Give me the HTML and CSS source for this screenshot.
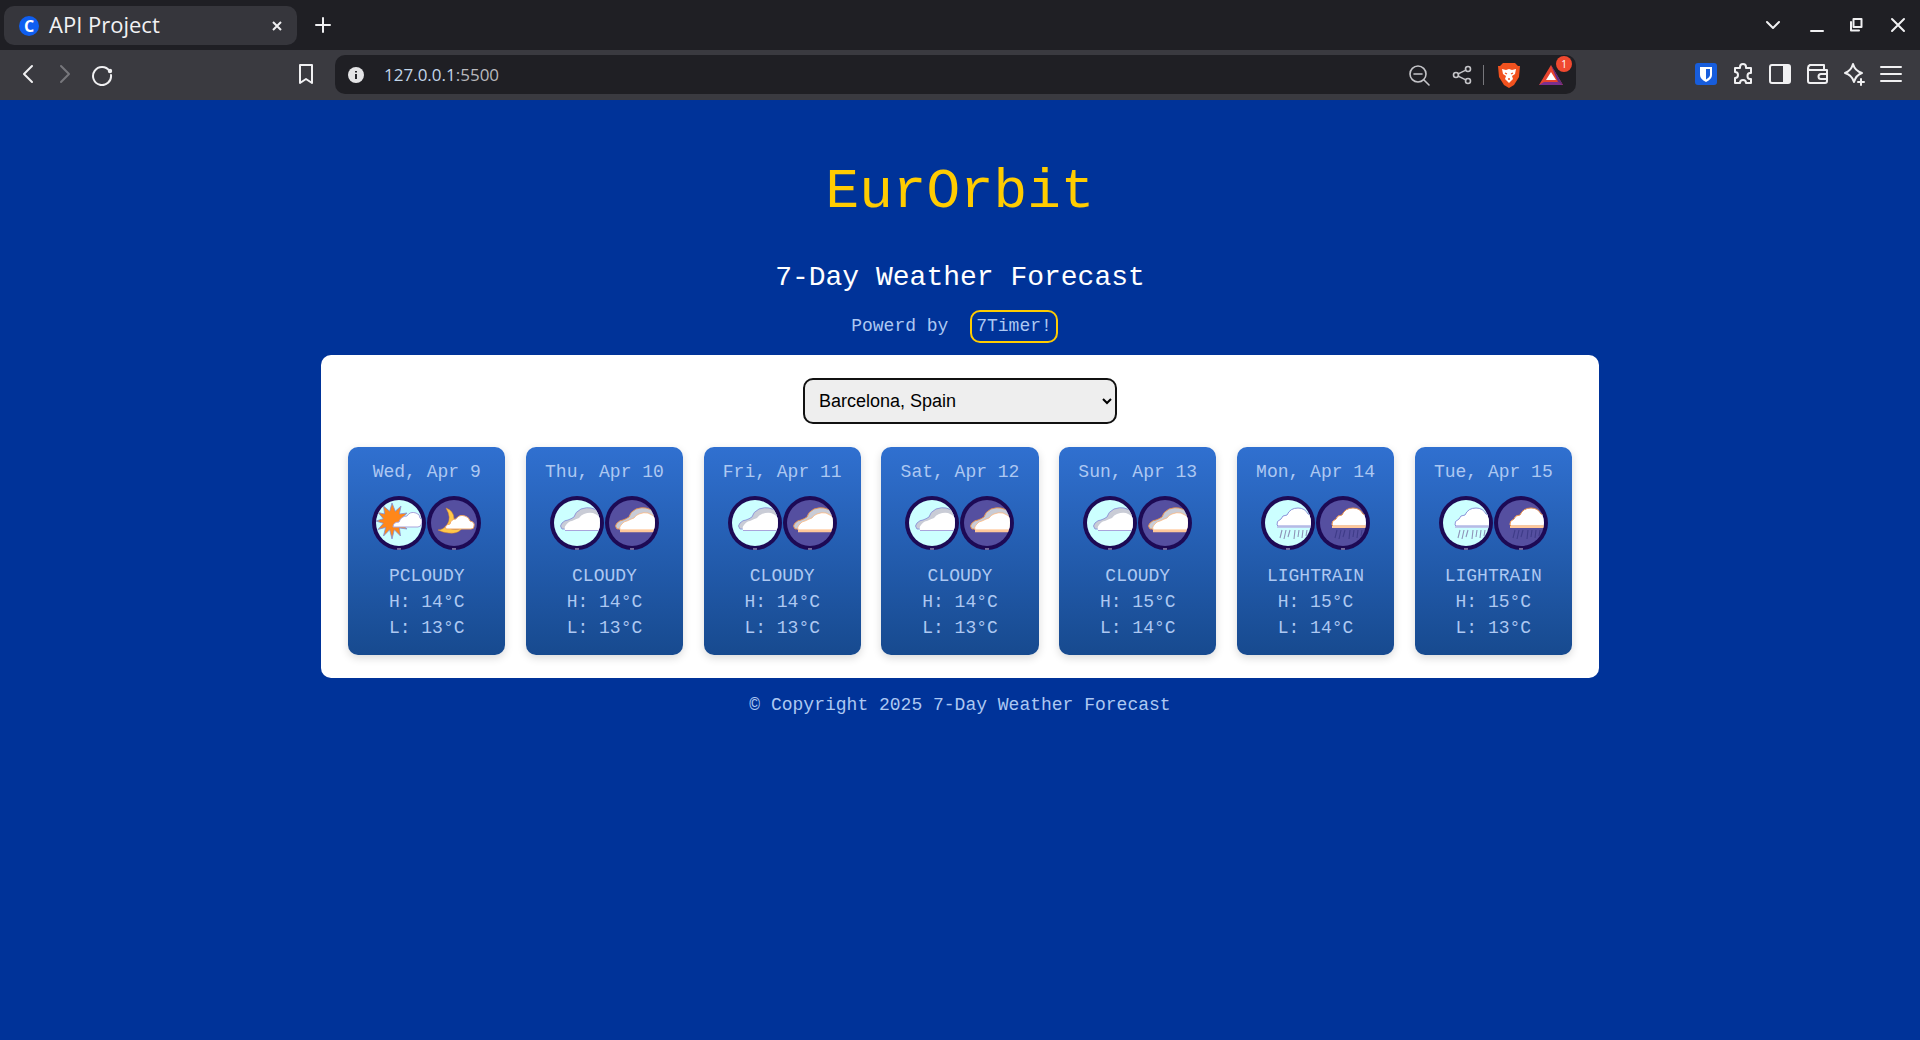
FILE: index.html
```html
<!DOCTYPE html>
<html>
<head>
    <title>API Project</title>
    <link rel="stylesheet" href="styles.css">
</head>
<body>

    <!-- Weather symbols, one per condition and day part -->
    <svg class="symbol-defs" width="0" height="0">
        <defs>
            <clipPath id="disc"><circle cx="27" cy="27" r="23"/></clipPath>
            <symbol id="pcloudy-day" viewBox="0 0 54 54">
                <circle cx="27" cy="27" r="23" fill="#ccffff"/>
                <g clip-path="url(#disc)">
                    <polygon points="37,25 29.7,22.7 35,17 27.400,18 29,10 23.300,15.300 20,7 17.700,15.300 11.500,10 12.600,18 6,16.500 11.300,22.700 4,25 11.300,27.300 6,33.500 13.600,31.400 11.500,40 17.700,33.700 20,43 22.300,33.700 28.500,40 27.400,32 35,33 29.700,27.300" fill="#ff8719" stroke="#7f8fd8" stroke-width=".8"/>
                    <path d="M21 31q0-5 6-5q2-6 8-6q3-5 9-3q4 1 4 5q3 1 2 5q-1 4-4 4H21z" fill="#fff" stroke="#a9a3dc"/>
                </g>
                <rect x="25" y="52.500" width="4" height="1" fill="#c8c8e0"/>
            </symbol>
            <symbol id="pcloudy-night" viewBox="0 0 54 54">
                <circle cx="27" cy="27" r="23" fill="#554fa0"/>
                <path d="M19 12q8 3 8 11q0 6-6 9q8 3 14 0q-3 6-13 5q-5 0-11-3q5 0 9-5q5-7-1-17z" fill="#ffc84a" stroke="#e8902a" stroke-width=".5"/>
                <path d="M19 33q-2-4 4-5q1-5 6-5q3-5 9-3q4 1 5 5q5 1 4 5q0 3-3 3H21z" fill="#fff" stroke="#f0a868"/>
                <rect x="25" y="52.500" width="4" height="1" fill="#c8c8e0"/>
            </symbol>
            <symbol id="cloudy-day" viewBox="0 0 54 54">
                <circle cx="27" cy="27" r="23" fill="#ccffff"/>
                <g clip-path="url(#disc)">
                    <path d="M15 33h-3q-3-3 0-6q3-3 6-3q3-1 6-3q1-5 7-8q6-2 10-1q6 1 9 5v16z" fill="#c9ccd6" stroke="#8a93d8" stroke-width=".9"/>
                    <path d="M15 34q-1-3 1-5q3-4 6-4q4-2 7-3q2-3 5-4q5-2 9-1q5 2 9 6v11z" fill="#fff"/>
                    <path d="M15 34.500h38" stroke="#a9a3dc" stroke-width="1.200"/>
                </g>
                <rect x="25" y="52.500" width="4" height="1" fill="#c8c8e0"/>
            </symbol>
            <symbol id="cloudy-night" viewBox="0 0 54 54">
                <circle cx="27" cy="27" r="23" fill="#554fa0"/>
                <g clip-path="url(#disc)">
                    <path d="M15 33h-3q-3-3 0-6q3-3 6-3q3-1 6-3q1-5 7-8q6-2 10-1q6 1 9 5v16z" fill="#c9ccd6" stroke="#e8904a" stroke-width=".9"/>
                    <path d="M15 34q-1-3 1-5q3-4 6-4q4-2 7-3q2-3 5-4q5-2 9-1q5 2 9 6v11z" fill="#fff" stroke="#ffb070" stroke-width=".7"/>
                    <path d="M15 35h38" stroke="#ffc89a" stroke-width="2.400"/>
                </g>
                <rect x="25" y="52.500" width="4" height="1" fill="#c8c8e0"/>
            </symbol>
            <symbol id="lightrain-day" viewBox="0 0 54 54">
                <circle cx="27" cy="27" r="23" fill="#ccffff"/>
                <g clip-path="url(#disc)">
                    <path d="M16 29q-1-4 4-6q1-4 6-4q3-7 11-7q7 0 10 6q5 1 5 6v6H17z" fill="#fff" stroke="#8a93d8"/>
                    <path d="M16 31h36" stroke="#b9b6e4" stroke-width="1.500"/>
                    <path d="M21 34l-2 8M25 34l-2 9M29 34l-2 7M34 34l-1 9M38 34l-1 7M42 34l-1 8M46 34l-1 6" stroke="#8e93b8" stroke-width="1.100"/>
                </g>
                <rect x="25" y="52.500" width="4" height="1" fill="#c8c8e0"/>
            </symbol>
            <symbol id="lightrain-night" viewBox="0 0 54 54">
                <circle cx="27" cy="27" r="23" fill="#554fa0"/>
                <g clip-path="url(#disc)">
                    <path d="M16 29q-1-4 4-6q1-4 6-4q3-7 11-7q7 0 10 6q5 1 5 6v6H17z" fill="#fff" stroke="#e8904a"/>
                    <path d="M16 31h36" stroke="#ffc89a" stroke-width="1.800"/>
                    <path d="M21 34l-2 8M25 34l-2 9M29 34l-2 7M34 34l-1 9M38 34l-1 7M42 34l-1 8M46 34l-1 6" stroke="#3f3c88" stroke-width="1.100"/>
                </g>
                <rect x="25" y="52.500" width="4" height="1" fill="#c8c8e0"/>
            </symbol>
        </defs>
    </svg>

    <!-- Browser tab strip -->
    <div class="tabstrip">
        <div class="tab">
            <span class="favicon">C</span>
            <span class="tab-title">API Project</span>
            <svg class="tab-close" width="12" height="12" viewBox="0 0 12 12"><path d="M2 2l8 8M10 2l-8 8"/></svg>
        </div>
        <svg class="icon new-tab" width="16" height="16" viewBox="0 0 16 16"><path d="M8 1v14M1 8h14"/></svg>
        <div class="window-controls">
            <svg class="icon" width="16" height="16" viewBox="0 0 16 16"><path d="M2 5l6 6 6-6"/></svg>
            <svg class="icon win-min" width="16" height="16" viewBox="0 0 16 16"><path d="M2 14h12"/></svg>
            <svg class="icon win-restore" width="16" height="16" viewBox="0 0 16 16"><path d="M5.500 2h8v8h-8zM3 5v8.500h8"/></svg>
            <svg class="icon win-close" width="16" height="16" viewBox="0 0 16 16"><path d="M2 2l12 12M14 2L2 14"/></svg>
        </div>
    </div>

    <!-- Browser toolbar -->
    <div class="toolbar">
        <div class="nav-buttons">
            <svg class="icon" width="24" height="24" viewBox="0 0 24 24"><path d="M16 4l-8 8 8 8"/></svg>
            <svg class="icon icon-dim" width="24" height="24" viewBox="0 0 24 24"><path d="M8 4l8 8-8 8"/></svg>
            <svg class="icon" width="24" height="24" viewBox="0 0 24 24"><path d="M19.500 9A9 9 0 1 0 21 13"/><circle class="icon-fill" cx="20" cy="9" r="2.200"/></svg>
        </div>
        <svg class="icon bookmark" width="24" height="24" viewBox="0 0 24 24"><path d="M6 3h12v18l-6-4-6 4z"/></svg>
        <div class="urlbar">
            <svg class="info" width="18" height="18" viewBox="0 0 18 18"><circle cx="9" cy="9" r="8" fill="#e4e4e6"/><path d="M9 8v5M9 5v1.500" stroke="#26262b" stroke-width="2"/></svg>
            <span class="url">127.0.0.1<span class="url-port">:5500</span></span>
            <div class="url-actions">
                <svg class="icon icon-thin" width="24" height="24" viewBox="0 0 24 24"><circle cx="11" cy="11" r="8"/><path d="M7 11h8M17 17l5 5"/></svg>
                <svg class="icon icon-thin action-share" width="20" height="20" viewBox="0 0 20 20"><circle cx="4" cy="10" r="2.500"/><circle cx="16" cy="4" r="2.500"/><circle cx="16" cy="16" r="2.500"/><path d="M6.200 8.900l7.600-3.800M6.200 11.100l7.600 3.800"/></svg>
                <span class="divider"></span>
                <svg class="brave" width="22" height="26" viewBox="0 0 22 26"><path d="M5 1h12l3 3 2 0-1 11-5 8-5 3-5-3-5-8L0 4h2z" fill="#f1521f"/><path d="M4 7l4 1 3-1 3 1 4-1-1 5-3 2 1 3-4 4-4-4 1-3-3-2z" fill="#fff"/><path d="M7 11l2 1M15 11l-2 1M10 17h2" stroke="#f1521f" stroke-width="1.300"/></svg>
                <div class="rewards">
                    <svg width="26" height="24" viewBox="0 0 26 24"><path d="M13 2L1 22h24z" fill="#e8452f"/><path d="M1 22l5-3h14l5 3z" fill="#7a2f8f"/><path d="M13 2l12 20-5-3z" fill="#5b2a86"/><path d="M13 9l-5 8h10z" fill="#fff"/></svg>
                    <span class="rewards-count">1</span>
                </div>
            </div>
        </div>
        <div class="extensions">
            <svg width="24" height="24" viewBox="0 0 24 24"><rect x="1" y="1" width="22" height="22" rx="3" fill="#175ddc"/><path d="M6 5h12v8q0 4-6 7q-6-3-6-7z" fill="#fff"/><path d="M12 7h4v6q0 2-4 4.500z" fill="#175ddc"/></svg>
            <svg class="icon" width="24" height="24" viewBox="0 0 24 24"><path d="M9 5q0-3 3-3t3 3v1h5v5h-1q-2.500 0-2.500 3t2.500 3h1v4h-5q0-3-3-3t-3 3H4v-5q3 0 3-3t-3-3V6h5z"/></svg>
            <svg class="icon" width="24" height="24" viewBox="0 0 24 24"><rect x="2" y="3" width="20" height="18" rx="2"/><path class="icon-fill" d="M15 3h5a2 2 0 0 1 2 2v14a2 2 0 0 1-2 2h-5z"/></svg>
            <svg class="icon" width="24" height="24" viewBox="0 0 24 24"><path d="M3 6v13a2 2 0 0 0 2 2h15a2 2 0 0 0 2-2V8H5Q3 8 3 6t2-3h14v5M22 12h-6a2 2 0 0 0 0 5h6"/></svg>
            <svg class="icon" width="24" height="24" viewBox="0 0 24 24"><path d="M11 2q2 7 9 9q-6 2-8 9q-2-7-9-9q6-2 8-9z"/><path d="M19 17v6M16 20h6"/></svg>
            <svg class="icon" width="24" height="24" viewBox="0 0 24 24"><path d="M2 5h20M2 12h20M2 19h20"/></svg>
        </div>
    </div>

    <!-- Page -->
    <header class="page-header">
        <h1>EurOrbit</h1>
        <h2>7-Day Weather Forecast</h2>
        <p class="powered">Powerd by <a class="badge" href="#">7Timer!</a></p>
    </header>

    <main class="container">
        <select class="city-select">
            <option>Barcelona, Spain</option>
        </select>

        <div class="forecast">
            <div class="day-card">
                <p>Wed, Apr 9</p>
                <div class="day-icons">
                    <svg class="weather-icon"><use href="#pcloudy-day"/></svg>
                    <svg class="weather-icon"><use href="#pcloudy-night"/></svg>
                </div>
                <p>PCLOUDY</p>
                <p>H: 14°C</p>
                <p>L: 13°C</p>
            </div>
            <div class="day-card">
                <p>Thu, Apr 10</p>
                <div class="day-icons">
                    <svg class="weather-icon"><use href="#cloudy-day"/></svg>
                    <svg class="weather-icon"><use href="#cloudy-night"/></svg>
                </div>
                <p>CLOUDY</p>
                <p>H: 14°C</p>
                <p>L: 13°C</p>
            </div>
            <div class="day-card">
                <p>Fri, Apr 11</p>
                <div class="day-icons">
                    <svg class="weather-icon"><use href="#cloudy-day"/></svg>
                    <svg class="weather-icon"><use href="#cloudy-night"/></svg>
                </div>
                <p>CLOUDY</p>
                <p>H: 14°C</p>
                <p>L: 13°C</p>
            </div>
            <div class="day-card">
                <p>Sat, Apr 12</p>
                <div class="day-icons">
                    <svg class="weather-icon"><use href="#cloudy-day"/></svg>
                    <svg class="weather-icon"><use href="#cloudy-night"/></svg>
                </div>
                <p>CLOUDY</p>
                <p>H: 14°C</p>
                <p>L: 13°C</p>
            </div>
            <div class="day-card">
                <p>Sun, Apr 13</p>
                <div class="day-icons">
                    <svg class="weather-icon"><use href="#cloudy-day"/></svg>
                    <svg class="weather-icon"><use href="#cloudy-night"/></svg>
                </div>
                <p>CLOUDY</p>
                <p>H: 15°C</p>
                <p>L: 14°C</p>
            </div>
            <div class="day-card">
                <p>Mon, Apr 14</p>
                <div class="day-icons">
                    <svg class="weather-icon"><use href="#lightrain-day"/></svg>
                    <svg class="weather-icon"><use href="#lightrain-night"/></svg>
                </div>
                <p>LIGHTRAIN</p>
                <p>H: 15°C</p>
                <p>L: 14°C</p>
            </div>
            <div class="day-card">
                <p>Tue, Apr 15</p>
                <div class="day-icons">
                    <svg class="weather-icon"><use href="#lightrain-day"/></svg>
                    <svg class="weather-icon"><use href="#lightrain-night"/></svg>
                </div>
                <p>LIGHTRAIN</p>
                <p>H: 15°C</p>
                <p>L: 13°C</p>
            </div>
        </div>
    </main>

    <footer class="page-footer">© Copyright 2025 7-Day Weather Forecast</footer>

</body>
</html>
```

FILE: styles.css
```css
/* Page base */
html, body {
    height: 100%;
}

body {
    margin: 0;
    background-color: #003399;
    font-family: "Liberation Mono", monospace;
    color: #adc8f2;
    overflow: hidden;
}

.symbol-defs {
    display: block;
    height: 0;
}

/* Browser chrome */
.icon {
    fill: none;
    stroke: #f0f0f2;
    stroke-width: 2;
    stroke-linecap: round;
    stroke-linejoin: round;
    flex: none;
}

.icon-fill {
    fill: #f0f0f2;
    stroke: none;
}

.icon-dim {
    stroke: #77777c;
}

.icon-thin {
    stroke: #c4c4c8;
    stroke-width: 1.6;
}

.tabstrip {
    display: flex;
    align-items: center;
    height: 50px;
    background-color: #1f1f24;
    padding-left: 4px;
    padding-right: 14px;
    box-sizing: border-box;
}

.tab {
    display: flex;
    align-items: center;
    width: 293px;
    height: 39px;
    margin-top: 1px;
    padding: 0 14px 0 15px;
    box-sizing: border-box;
    background-color: #36363c;
    border-radius: 10px;
    font-family: "Open Sans", sans-serif;
    font-size: 22px;
    color: #f2f2f4;
}

.favicon {
    display: flex;
    align-items: center;
    justify-content: center;
    width: 20px;
    height: 20px;
    border-radius: 50%;
    background-color: #0f5ef0;
    color: #fff;
    font-size: 16px;
    font-weight: 700;
    flex: none;
}

.tab-title {
    margin-left: 10px;
    margin-top: -3px;
    flex: 1;
}

.tab-close {
    fill: none;
    stroke: #f0f0f2;
    stroke-width: 2;
}

.new-tab {
    margin-left: 18px;
}

.window-controls {
    display: flex;
    align-items: center;
    margin-left: auto;
}

.win-min {
    margin-left: 28px;
}

.win-restore {
    margin-left: 23px;
}

.win-close {
    margin-left: 26px;
}

.toolbar {
    display: flex;
    align-items: center;
    height: 50px;
    background-color: #3a3a40;
    box-sizing: border-box;
    padding-bottom: 1px;
}

.nav-buttons {
    display: flex;
    align-items: center;
    gap: 13px;
    margin-left: 16px;
    margin-bottom: 2px;
}

.bookmark {
    margin-left: 180px;
    margin-bottom: 2px;
}

.urlbar {
    display: flex;
    align-items: center;
    width: 1241px;
    height: 39px;
    margin-left: 17px;
    padding: 0 12px 0 12px;
    box-sizing: border-box;
    background-color: #1f1f24;
    border-radius: 10px;
}

.url {
    margin-left: 19px;
    font-family: "Open Sans", sans-serif;
    font-size: 17px;
    color: #c2d6ea;
}

.url-port {
    color: #b9b9bd;
}

.url-actions {
    display: flex;
    align-items: center;
    margin-left: auto;
}

.action-share {
    margin-left: 21px;
}

.divider {
    width: 1px;
    height: 20px;
    background-color: #77777c;
    margin: 0 14px 0 11px;
}

.rewards {
    position: relative;
    display: flex;
    margin-left: 18px;
}

/* count bubble over the triangle */
.rewards-count {
    position: absolute;
    top: -7px;
    right: -8px;
    width: 16px;
    height: 16px;
    border-radius: 50%;
    background-color: #f0492f;
    color: #fff;
    font-family: "Open Sans", sans-serif;
    font-size: 10px;
    line-height: 16px;
    text-align: center;
}

.extensions {
    display: flex;
    align-items: center;
    gap: 13px;
    margin-left: 118px;
    margin-bottom: 1px;
}

/* Page header */
.page-header {
    text-align: center;
}

h1 {
    margin: 0;
    padding-top: 54px;
    font-size: 56px;
    font-weight: 400;
    line-height: 76px;
    color: #ffcc00;
}

h2 {
    margin: 32px 0 0;
    font-size: 28px;
    font-weight: 400;
    line-height: 32px;
    color: #fff;
}

.powered {
    margin: 15px 0 0;
    font-size: 18px;
    line-height: 34px;
    height: 46px;
}

.badge {
    display: inline-block;
    margin: 0 11px 0 11px;
    padding: 0 4px;
    border: 2px solid #ffcc00;
    border-radius: 10px;
    color: #adc8f2;
    line-height: 29px;
    text-decoration: none;
}

/* Forecast card */
.container {
    width: 1278px;
    margin: 0 auto;
    padding: 23px 27px 23px;
    box-sizing: border-box;
    background-color: #fff;
    border-radius: 10px;
    text-align: center;
}

.city-select {
    display: block;
    width: 314px;
    height: 46px;
    margin: 0 auto;
    padding: 0 10px;
    background-color: #eeeeee;
    border: 2px solid #111;
    border-radius: 10px;
    font-family: "Liberation Sans", sans-serif;
    font-size: 18px;
    color: #000;
}

.forecast {
    display: grid;
    grid-template-columns: repeat(7, 1fr);
    gap: 20.4px;
    margin-top: 23px;
}

.day-card {
    padding: 12px 0 14px;
    background: linear-gradient(#3070d0, #174a8f);
    border-radius: 10px;
    box-shadow: 0 3px 8px rgba(0, 0, 0, 0.15);
    font-size: 18px;
    line-height: 26px;
}

.day-card p {
    margin: 0;
}

.day-icons {
    display: flex;
    justify-content: center;
    gap: 1px;
    margin: 11px 0 13px;
}

.weather-icon {
    display: block;
    width: 54px;
    height: 54px;
    border-radius: 50%;
    background-color: #1d0a55;
}

/* Footer */
.page-footer {
    margin-top: 14px;
    font-size: 18px;
    line-height: 26px;
    text-align: center;
}
```
